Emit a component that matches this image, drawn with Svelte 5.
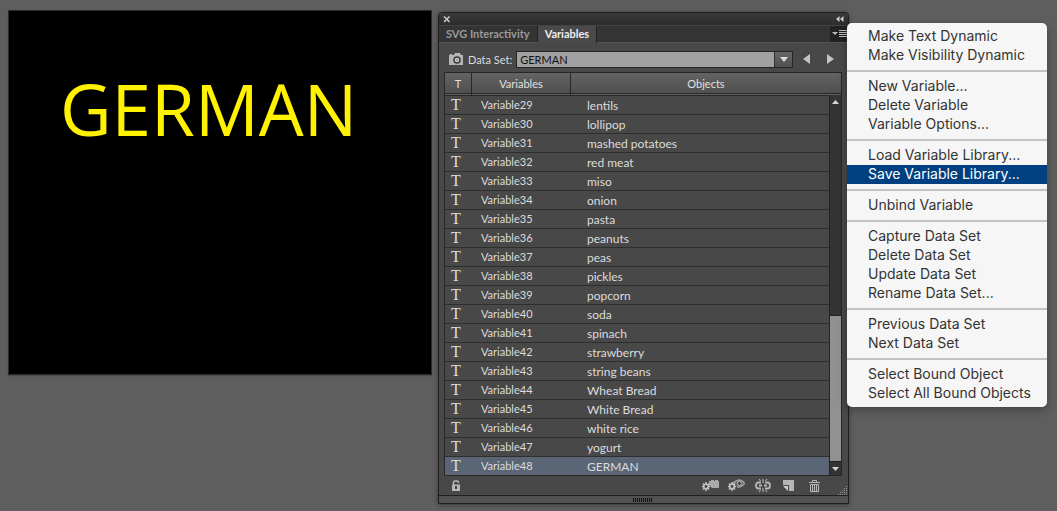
<script lang="ts">
  const objects = [
    "lentils", "lollipop", "mashed potatoes", "red meat", "miso",
    "onion", "pasta", "peanuts", "peas", "pickles",
    "popcorn", "soda", "spinach", "strawberry", "string beans",
    "Wheat Bread", "White Bread", "white rice", "yogurt", "GERMAN",
  ];
  const rows = objects.map((object, i) => ({ name: `Variable${29 + i}`, object }));

  const menu = [
    ["Make Text Dynamic", "Make Visibility Dynamic"],
    ["New Variable...", "Delete Variable", "Variable Options..."],
    ["Load Variable Library...", "Save Variable Library..."],
    ["Unbind Variable"],
    ["Capture Data Set", "Delete Data Set", "Update Data Set", "Rename Data Set..."],
    ["Previous Data Set", "Next Data Set"],
    ["Select Bound Object", "Select All Bound Objects"],
  ];

  let selected = $state("Variable48");
  let active = $state("Save Variable Library...");
  let dataSet = $state("GERMAN");
</script>

<div class="workspace">
  <div class="artboard"><span>{dataSet}</span></div>

  <div class="panel-area">
    <section class="panel" aria-label="Variables">
      <div class="titlebar">
        <button aria-label="Close">
          <svg width="8" height="8" viewBox="0 0 8 8"><path d="M1 1.5 6.5 7M6.5 1.5 1 7" stroke="#ccc" stroke-width="1.5" /></svg>
        </button>
        <button aria-label="Collapse">
          <svg width="8" height="6" viewBox="0 0 8 6"><path d="M3.5 0v6L0 3zM7.5 0v6L4 3z" fill="#ccc" /></svg>
        </button>
      </div>

      <div class="tabs">
        <button class="tab">SVG Interactivity</button>
        <button class="tab current">Variables</button>
        <button class="flyout" aria-label="Panel menu">
          <svg width="15" height="10" viewBox="0 0 15 10">
            <path d="M0 3h6L3 6z" fill="#bbb" />
            <path d="M7 1.5h8M7 3.5h8M7 5.5h8M7 7.5h8" stroke="#bbb" />
          </svg>
        </button>
      </div>

      <div class="data-set">
        <svg width="14" height="12" viewBox="0 0 14 12">
          <path d="M0 2h1V1h2v1h2l1-2h5l1 2h2v10H0z" fill="#b5b5b5" />
          <circle cx="8" cy="7" r="3" fill="#ccc" stroke="#3c3c3c" stroke-width="1.5" />
          <path d="M7 7h2" stroke="#777" />
        </svg>
        <label for="data-set">Data Set:</label>
        <div class="combo">
          <select id="data-set" bind:value={dataSet}>
            <option>GERMAN</option>
          </select>
          <span class="combo-arrow">
            <svg width="8" height="5" viewBox="0 0 8 5"><path d="M0 0h8L4 5z" fill="#ddd" /></svg>
          </span>
        </div>
        <button class="step" aria-label="Previous data set">
          <svg width="7" height="10" viewBox="0 0 7 10"><path d="M7 0v10L0 5z" fill="#c4c4c4" /></svg>
        </button>
        <button class="step" aria-label="Next data set">
          <svg width="7" height="10" viewBox="0 0 7 10"><path d="M0 0v10l7-5z" fill="#c4c4c4" /></svg>
        </button>
      </div>

      <div class="list">
        <table>
          <thead>
            <tr><th class="type">T</th><th class="name">Variables</th><th>Objects</th></tr>
          </thead>
          <tbody>
            {#each rows as row}
              <tr class:selected={row.name === selected} onclick={() => (selected = row.name)}>
                <td class="glyph">T</td>
                <td class="variable">{row.name}</td>
                <td class="object">{row.object}</td>
              </tr>
            {/each}
          </tbody>
        </table>
        <div class="scrollbar">
          <button aria-label="Scroll up">
            <svg width="7" height="4" viewBox="0 0 7 4"><path d="M0 4h7L3.5 0z" fill="#d6d6d6" /></svg>
          </button>
          <div class="track"><div class="thumb"></div></div>
          <button aria-label="Scroll down">
            <svg width="7" height="4" viewBox="0 0 7 4"><path d="M0 0h7L3.5 4z" fill="#d6d6d6" /></svg>
          </button>
        </div>
      </div>

      <div class="footer">
        <button class="lock" aria-label="Lock variables">
          <svg width="9" height="11" viewBox="0 0 9 11">
            <path d="M1.500 5V2.500Q1.500 1 3 1h2Q6.500 1 6.500 3" fill="none" stroke="#b5b5b5" stroke-width="1.500" />
            <path d="M0 4.500h8V11H0z" fill="#b5b5b5" />
            <path d="M3 6h2v3H3z" fill="#444" />
          </svg>
        </button>
        <button aria-label="Make object dynamic">
          <svg width="17" height="13" viewBox="0 0 17 13">
            <path d="M7 2h2V1h3v1h1V1h3v1h1v7h-7L7 6z" fill="#a9a9a9" />
            <path d="M4 3v9M0 7.500h8M1 4.500l6 6M7 4.500l-6 6" stroke="#c4c4c4" stroke-width="1.500" />
            <circle cx="4" cy="7.500" r="2.200" fill="#444" stroke="#c4c4c4" stroke-width="1.500" />
          </svg>
        </button>
        <button aria-label="Make visibility dynamic">
          <svg width="17" height="13" viewBox="0 0 17 13">
            <path d="M5 4.500Q8 1 12 1Q15 1.500 16.500 4.500Q14 8.500 9 8" fill="#666" stroke="#a0a0a0" stroke-width="1.500" />
            <circle cx="11.500" cy="4.500" r="2" fill="#3c3c3c" stroke="#b8b8b8" />
            <path d="M4 3v9M0 7.500h8M1 4.500l6 6M7 4.500l-6 6" stroke="#c4c4c4" stroke-width="1.500" />
            <circle cx="4" cy="7.500" r="2.200" fill="#444" stroke="#c4c4c4" stroke-width="1.500" />
          </svg>
        </button>
        <button aria-label="Unbind variable">
          <svg width="16" height="13" viewBox="0 0 16 13">
            <path d="M6 3.500H3.500Q1 3.500 1 6.500T3.500 9.500H6M10 3.500h2.500Q15 3.500 15 6.500T12.500 9.500H10M4 6.500h3M9 6.500h3" fill="none" stroke="#b5b5b5" stroke-width="1.800" />
            <path d="M8 0v4M8 9v4M4 0l1.500 2M12 0l-1.500 2M4 13l1.500-2M12 13l-1.500-2" stroke="#bbb" />
          </svg>
        </button>
        <button aria-label="New variable">
          <svg width="11" height="11" viewBox="0 0 11 11">
            <path d="M0 0h11v11H6V5H0z" fill="#b5b5b5" />
            <path d="M0 6h5v5z" fill="#d0d0d0" />
          </svg>
        </button>
        <button aria-label="Delete variable">
          <svg width="11" height="12" viewBox="0 0 11 12">
            <path d="M3.500 2V.5h4V2M0 2.500h11M1.500 4.500h8v7h-8zM3.500 4v7M5.500 4v7M7.500 4v7" fill="none" stroke="#b8b8b8" />
          </svg>
        </button>
        <svg class="resize" width="10" height="10" viewBox="0 0 10 10">
          <path d="M0 9.500h10M2 7.500h8M4 5.500h6M6 3.500h4M8 1.500h2" stroke="#999" stroke-dasharray="1 1" />
        </svg>
      </div>

      <div class="grip">
        <svg width="20" height="4" viewBox="0 0 20 4"><path d="M0 2h20" stroke="#111" stroke-width="4" stroke-dasharray="1 1" /></svg>
      </div>
    </section>

    <div class="menu" role="menu">
      {#each menu as group, i}
        {#if i > 0}<hr />{/if}
        {#each group as item}
          <button role="menuitem" class:active={item === active} onmouseenter={() => (active = item)}>{item}</button>
        {/each}
      {/each}
    </div>
  </div>
</div>

<style>
  :global(body) {
    margin: 0;
    background: #5e5e5e;
  }
  .workspace {
    display: flex;
    align-items: flex-start;
    gap: 6px;
    padding: 10px 208px 8px 8px;
    min-height: 100vh;
    box-sizing: border-box;
    font-family: Lato, "Open Sans", sans-serif;
    font-size: 11px;
  }
  button {
    display: flex;
    align-items: center;
    justify-content: center;
    padding: 0;
    border: none;
    background: none;
    color: inherit;
    font: inherit;
  }
  svg {
    display: block;
    flex-shrink: 0;
  }
  .artboard {
    flex: 423 1 0;
    min-width: 0;
    box-sizing: border-box;
    min-height: 365px;
    border: 1px solid #2b2b2b;
    background: #000;
    box-shadow: 0 1px 1px #4a4a4a;
    color: #fff200;
    font-family: "Open Sans", sans-serif;
    font-size: 71px;
    line-height: 100px;
  }
  .artboard span {
    display: block;
    margin: 48px 0 0 51px;
  }
  .panel-area {
    position: relative;
    flex: 412 1 0;
    min-width: 0;
    padding-top: 2px;
  }
  .panel {
    border: 1px solid #1f1f1f;
    border-radius: 4px 4px 0 0;
    background: #484848;
    box-shadow: 0 1px 5px rgba(0, 0, 0, 0.4);
    color: #dcdcdc;
  }
  .titlebar {
    display: flex;
    justify-content: space-between;
    align-items: center;
    height: 12px;
    padding: 0 4px;
    border-radius: 3px 3px 0 0;
    background: linear-gradient(#3a3a3a, #2c2c2c);
  }
  .tabs {
    display: flex;
    height: 16px;
    border-top: 1px solid #444;
    border-bottom: 1px solid #555;
    background: #343434;
  }
  .tab {
    padding: 0 7px 2px;
    border-right: 1px solid #222;
    color: #9a9a9a;
    font-weight: 700;
  }
  .tab.current {
    margin-bottom: -1px;
    background: #4a4a4a;
    color: #eee;
  }
  .flyout {
    width: 18px;
    margin-left: auto;
    background: #222;
  }
  .data-set {
    display: flex;
    align-items: center;
    height: 26px;
    padding: 3px 14px 0 10px;
  }
  .data-set label {
    margin: 0 4px 0 5px;
  }
  .combo {
    position: relative;
    flex: 1;
    margin-right: 10px;
  }
  .combo select {
    display: block;
    width: 100%;
    height: 17px;
    padding: 0 22px 0 3px;
    border: 1px solid #262626;
    border-radius: 0;
    appearance: none;
    background: #a1a1a1;
    color: #111;
    font: inherit;
    line-height: 15px;
  }
  .combo-arrow {
    position: absolute;
    top: 1px;
    right: 1px;
    bottom: 1px;
    width: 17px;
    display: flex;
    align-items: center;
    justify-content: center;
    border-left: 1px solid #303030;
    background: linear-gradient(#666, #505050);
    pointer-events: none;
  }
  .step {
    height: 14px;
  }
  .step + .step {
    margin-left: 17px;
  }
  .list {
    position: relative;
    margin: 0 6px 0 5px;
    border: 1px solid #272727;
  }
  table {
    width: 100%;
    table-layout: fixed;
    border-spacing: 0;
  }
  th {
    height: 20px;
    padding: 0;
    border-right: 1px solid #272727;
    border-bottom: 3px double #272727;
    background: linear-gradient(#636363, #505050);
    color: #e0e0e0;
    font-weight: 400;
  }
  th:last-child {
    border-right: none;
  }
  .type {
    width: 26px;
  }
  .name {
    width: 98px;
  }
  td {
    height: 18px;
    padding: 0;
    border-bottom: 1px solid #2e2e2e;
    line-height: 18px;
    white-space: nowrap;
  }
  tbody tr:last-child td {
    border-bottom: none;
  }
  .glyph {
    padding-left: 6px;
    font-family: "Liberation Serif", serif;
    font-size: 16px;
  }
  .variable {
    padding-left: 9px;
  }
  .object {
    height: 16px;
    padding: 2px 0 0 16px;
    font-size: 12px;
    line-height: 16px;
  }
  .selected td {
    background: #5a6576;
  }
  .scrollbar {
    position: absolute;
    top: 22px;
    right: 0;
    bottom: 0;
    width: 11px;
    display: flex;
    flex-direction: column;
    border-left: 1px solid #222;
    background: #343434;
  }
  .scrollbar button {
    height: 13px;
  }
  .track {
    flex: 1;
    display: flex;
    flex-direction: column;
    justify-content: flex-end;
  }
  .thumb {
    height: 41%;
    border-top: 1px solid #222;
    border-bottom: 1px solid #222;
    background: #919191;
  }
  .footer {
    display: flex;
    align-items: center;
    gap: 9px;
    height: 19px;
    padding-left: 9px;
  }
  .footer button {
    width: 17px;
  }
  .footer .lock {
    margin-right: auto;
  }
  .resize {
    align-self: flex-end;
    margin-left: 6px;
  }
  .grip {
    display: flex;
    align-items: center;
    justify-content: center;
    height: 7px;
    border-top: 1px solid #1f1f1f;
    background: #525252;
  }
  .menu {
    position: absolute;
    top: 13px;
    left: calc(100% - 2px);
    width: 200px;
    padding: 4px 0;
    border-radius: 5px;
    background: #f6f6f6;
    box-shadow: 0 3px 10px rgba(0, 0, 0, 0.3);
    color: #333;
    font-family: Inter, sans-serif;
    font-size: 14px;
  }
  .menu button {
    justify-content: flex-start;
    width: 100%;
    height: 19px;
    padding: 0 0 2px 21px;
    white-space: nowrap;
  }
  .menu button.active {
    background: #003f80;
    color: #fff;
  }
  .menu hr {
    height: 2px;
    margin: 5px 0;
    border: none;
    background: #c4c4c4;
  }
</style>
